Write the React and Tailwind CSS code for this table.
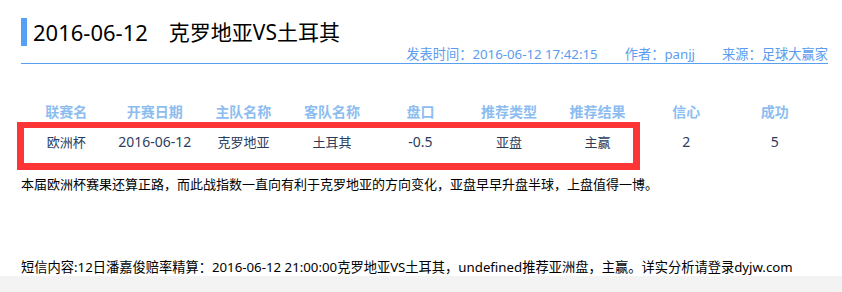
export default function App() {
  const heads = ["联赛名", "开赛日期", "主队名称", "客队名称", "盘口", "推荐类型", "推荐结果", "信心", "成功"];
  const vals = [
    ["欧洲杯", "text-[13px]"],
    ["2016-06-12", "text-[14px]"],
    ["克罗地亚", "text-[13px]"],
    ["土耳其", "text-[13px]"],
    ["-0.5", "text-[14px]"],
    ["亚盘", "text-[13px]"],
    ["主赢", "text-[13px]"],
    ["2", "text-[14px]"],
    ["5", "text-[14px]"],
  ];
  return (
    <div className="w-[842px] h-[292px] bg-white overflow-hidden flex flex-col" style={{ fontFamily: '"Noto Sans","Noto Sans CJK SC",sans-serif' }}>
      <div className="relative pl-[21px] w-[828px]">
        <div className="mt-[18px] h-[28px] flex items-center border-l-[6px] border-[#55a0f7] pl-[6px] text-[22px] leading-[28px] text-black">
          <span>2016-06-12</span>
          <span className="ml-[21px] text-[21px]">克罗地亚VS土耳其</span>
        </div>
        <div className="h-[18px] border-b border-[#5aa0f0] flex justify-end items-center text-[13.25px] leading-[17px] text-[#5b9cef]">
          <span>发表时间：2016-06-12 17:42:15</span>
          <span className="ml-[27px]">作者：panjj</span>
          <span className="ml-[27px]">来源：足球大赢家</span>
        </div>
        <div className="mt-[33px] ml-[1px] w-[797px] grid grid-cols-9">
          {heads.map((h) => (
            <div key={h} className="h-[30px] flex items-center justify-center text-[14px] leading-[20px] font-bold text-[#8dbdf0]">{h}</div>
          ))}
          {vals.map(([v, c], i) => (
            <div key={i} className={"h-[30px] flex items-center justify-center leading-[20px] text-[#2c3d5c] " + c}>{v}</div>
          ))}
        </div>
        <div className="absolute left-[17px] top-[122px] w-[623px] h-[48px] border-[7px] border-t-[6px] border-[#fc3636]"></div>
        <div className="mt-[17px] text-[13px] leading-[20px] text-black">
          本届欧洲杯赛果还算正路，而此战指数一直向有利于克罗地亚的方向变化，亚盘早早升盘半球，上盘值得一博。
        </div>
        <div className="mt-[64px] text-[13.25px] leading-[18px] text-black whitespace-nowrap">
          短信内容:12日潘嘉俊赔率精算：2016-06-12 21:00:00克罗地亚VS土耳其，undefined推荐亚洲盘，主赢。详实分析请登录dyjw.com
        </div>
      </div>
      <div className="h-[16px] w-full bg-[#f3f3f3]"></div>
    </div>
  );
}
